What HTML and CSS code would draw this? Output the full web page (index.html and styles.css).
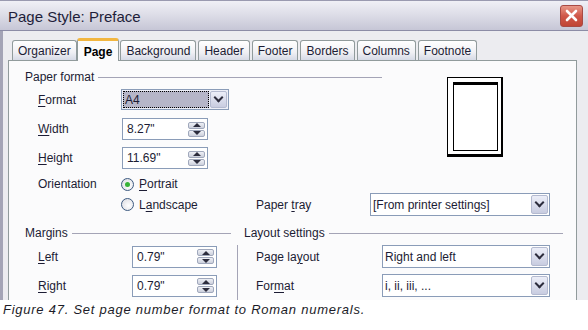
FILE: index.html
```html
<!DOCTYPE html>
<html lang="en">
<head>
    <meta charset="UTF-8">
    <title>Page Style: Preface</title>
    <link rel="stylesheet" href="styles.css">
</head>
<body>
<div class="dialog">
    <div class="titlebar">
        <span class="wintitle">Page Style: Preface</span>
        <span class="close">
            <svg width="13" height="13" viewBox="0 0 13 13"><path d="M2 2l9 9M11 2l-9 9" stroke="#fff" stroke-width="2.6" stroke-linecap="round"/></svg>
        </span>
    </div>
    <div class="main">
        <div class="tabs">
            <span class="tab">Organizer</span>
            <span class="tab active">Page</span>
            <span class="tab">Background</span>
            <span class="tab">Header</span>
            <span class="tab">Footer</span>
            <span class="tab">Borders</span>
            <span class="tab">Columns</span>
            <span class="tab">Footnote</span>
        </div>
        <div class="panel">
            <div class="paper">
                <div class="paper-left">
                    <div class="heading"><span>Paper format</span><i class="rule"></i></div>
                    <div class="row r-format">
                        <span class="lbl"><u>F</u>ormat</span>
                        <span class="select focus w-format"><span class="val">A4</span><span class="drop"></span></span>
                    </div>
                    <div class="row r-field">
                        <span class="lbl"><u>W</u>idth</span>
                        <span class="field w-paper"><span class="val">8.27"</span><span class="spin"><i></i><i></i></span></span>
                    </div>
                    <div class="row r-field">
                        <span class="lbl"><u>H</u>eight</span>
                        <span class="field w-paper"><span class="val">11.69"</span><span class="spin"><i></i><i></i></span></span>
                    </div>
                </div>
                <div class="preview"><div class="sheet"></div></div>
            </div>
            <div class="row r-orient">
                <span class="lbl">Orientation</span>
                <span class="radio checked"></span>
                <span><u>P</u>ortrait</span>
            </div>
            <div class="row r-land">
                <span class="lbl"></span>
                <span class="opt"><span class="radio"></span><span>L<u>a</u>ndscape</span></span>
                <span>Paper <u>t</u>ray</span>
                <span class="select w-tray"><span class="val">[From printer settings]</span><span class="drop"></span></span>
            </div>
            <div class="lower">
                <div class="heading h-margins"><span>Margins</span><i class="rule"></i></div>
                <div class="heading h-layout"><span>Layout settings</span><i class="rule"></i></div>
                <div class="col-margins">
                    <div class="row r-low">
                        <span class="lbl lbl-m"><u>L</u>eft</span>
                        <span class="field w-margin"><span class="val">0.79"</span><span class="spin"><i></i><i></i></span></span>
                    </div>
                    <div class="row r-low">
                        <span class="lbl lbl-m"><u>R</u>ight</span>
                        <span class="field w-margin"><span class="val">0.79"</span><span class="spin"><i></i><i></i></span></span>
                    </div>
                </div>
                <div class="col-layout">
                    <div class="row r-low">
                        <span class="lbl lbl-l">Page la<u>y</u>out</span>
                        <span class="select w-layout"><span class="val">Right and left</span><span class="drop"></span></span>
                    </div>
                    <div class="row r-low">
                        <span class="lbl lbl-l">For<u>m</u>at</span>
                        <span class="select w-layout"><span class="val">i, ii, iii, ...</span><span class="drop"></span></span>
                    </div>
                </div>
            </div>
        </div>
    </div>
</div>
<p class="figcap">Figure 47. Set page number format to Roman numerals.</p>
</body>
</html>
```

FILE: styles.css
```css
* {
    box-sizing: border-box;
}

body {
    margin: 0;
    width: 588px;
    height: 330px;
    overflow: hidden;
    background: #fff;
    font-family: "Liberation Sans", Arial, sans-serif;
    font-size: 12px;
    color: #1c1c34;
}

u {
    text-decoration-thickness: 1px;
    text-underline-offset: 2px;
}

.dialog {
    height: 300px;
    background: #ececf0;
    overflow: hidden;
}

.titlebar {
    height: 31px;
    display: flex;
    align-items: center;
    justify-content: space-between;
    padding: 0 5px 0 8px;
    border-top: 1px solid #9a9ab0;
    border-bottom: 1px solid #8c8ca6;
    background: linear-gradient(#f0f0f6, #dedee8 45%, #c6c6d6);
}

.wintitle {
    font-size: 15px;
    color: #1e1e3a;
    padding-top: 2px;
}

.close {
    width: 23px;
    height: 22px;
    border: 1px solid #a84a44;
    border-radius: 3px;
    background: linear-gradient(#e89888, #d0584a 50%, #c04434);
    display: flex;
    align-items: center;
    justify-content: center;
}

.main {
    height: 269px;
    border-left: 3px solid #a4a4b6;
}

.tabs {
    height: 29px;
    display: flex;
    align-items: flex-end;
    gap: 2px;
    padding-left: 9px;
}

.tab {
    height: 20px;
    padding: 3px 5px 0;
    border: 1px solid #919b9c;
    border-bottom: none;
    border-radius: 3px 3px 0 0;
    background: linear-gradient(#ffffff, #f0f0f4 60%, #d6dae6);
    color: #1c1c34;
}

.tab.active {
    height: 23px;
    margin: 0 -1px -1px -2px;
    padding: 4px 6px 0;
    border-top: 3px solid #f2b640;
    background: #fbfbfc;
    font-weight: bold;
    color: #000;
}

.panel {
    margin-left: 5px;
    width: 569px;
    height: 240px;
    border: 1px solid #919b9c;
    border-bottom: none;
    background: #fbfbfc;
    padding: 9px 0 0 16px;
    overflow: hidden;
}

.heading {
    height: 14px;
    display: flex;
    align-items: center;
}

.rule {
    flex: 1;
    height: 0;
    margin-left: 4px;
    border-top: 1px solid #a4a4b6;
}

.paper {
    display: flex;
}

.paper-left {
    width: 357px;
}

.preview {
    margin: 7px 0 0 65px;
    width: 56px;
    height: 80px;
    border: solid #000;
    border-width: 1px 2px 3px 1px;
    background: #fff;
    padding: 4px 0 0 5px;
}

.sheet {
    width: 45px;
    height: 69px;
    border: 1px solid #000;
    border-top-width: 3px;
}

.row {
    display: flex;
    align-items: center;
}

.lbl {
    width: 96px;
    padding-left: 13px;
    flex: none;
}

.r-format {
    height: 21px;
    margin-top: 5px;
}

.r-field {
    height: 22px;
    margin-top: 8px;
}

.r-field + .r-field {
    margin-top: 7px;
}

.r-field .field {
    margin-left: 1px;
}

.r-orient {
    height: 14px;
    margin-top: 8px;
    gap: 5px;
}

.r-orient .lbl {
    margin-right: -5px;
}

.r-land {
    height: 23px;
    margin-top: 2px;
}

.opt {
    width: 135px;
    display: flex;
    align-items: center;
    gap: 5px;
}

.r-land .opt + span {
    width: 114px;
}

.field, .select {
    position: relative;
    display: flex;
    align-items: center;
    border: 1px solid #8a9cb8;
    background: #fff;
    flex: none;
}

.field {
    height: 22px;
    padding-left: 4px;
}

.select {
    height: 23px;
    padding-left: 2px;
}

.w-format {
    width: 108px;
    height: 21px;
}

.w-paper {
    width: 86px;
}

.w-tray {
    width: 180px;
}

.w-margin {
    width: 85px;
}

.w-layout {
    width: 168px;
}

.val {
    flex: 1;
    white-space: nowrap;
}

.select.focus {
    padding: 1px;
    background: #eef0f8;
}

.select.focus .val {
    align-self: stretch;
    display: flex;
    align-items: center;
    padding-left: 1px;
    background: #b6b6c8;
    border: 1px dotted #000;
    margin-right: 1px;
}

.drop {
    width: 17px;
    height: 19px;
    margin-right: 1px;
    border: 1px solid #b4bad0;
    border-radius: 2px;
    background: linear-gradient(#eceef8, #c8cce0);
    display: flex;
    align-items: center;
    justify-content: center;
}

.focus .drop {
    height: 17px;
    margin-right: 0;
}

.drop::after {
    content: "";
    width: 5px;
    height: 5px;
    margin-top: -4px;
    border-right: 2px solid #2c2c3c;
    border-bottom: 2px solid #2c2c3c;
    transform: rotate(45deg);
}

.spin {
    width: 17px;
    height: 15px;
    margin-right: 2px;
    display: flex;
    flex-direction: column;
    gap: 1px;
}

.spin i {
    flex: 1;
    border: 1px solid #a0a8bc;
    border-radius: 2px;
    background: linear-gradient(#eef0f6, #ccd0dc);
    display: flex;
    align-items: center;
    justify-content: center;
}

.spin i::after {
    content: "";
    border-left: 4px solid transparent;
    border-right: 4px solid transparent;
    border-bottom: 4px solid #2c2c3c;
}

.spin i + i::after {
    border-bottom: none;
    border-top: 4px solid #2c2c3c;
}

.radio {
    width: 13px;
    height: 13px;
    border: 1px solid #3c5a80;
    border-radius: 50%;
    background: radial-gradient(circle at 60% 60%, #ffffff, #e4e4e8 70%, #c8ccd8);
    display: flex;
    align-items: center;
    justify-content: center;
    flex: none;
}

.radio.checked::after {
    content: "";
    width: 5px;
    height: 5px;
    border-radius: 50%;
    background: #36b236;
}

.lower {
    margin-top: 10px;
    display: grid;
    grid-template-columns: 212px 1fr;
}

.h-margins {
    margin-right: 6px;
}

.h-layout {
    padding-left: 7px;
    margin-right: 13px;
}

.col-margins, .col-layout {
    margin-top: 5px;
    padding-bottom: 10px;
}

.col-layout {
    border-left: 1px solid #a4a4b6;
    padding-left: 18px;
}

.r-low {
    height: 23px;
}

.r-low + .r-low {
    margin-top: 6px;
}

.lbl-m {
    width: 107px;
}

.lbl-l {
    width: 126px;
    padding-left: 0;
}

.figcap {
    margin: 2px 0 0 3px;
    font-style: italic;
    font-size: 13px;
    letter-spacing: 0.75px;
    color: #1c1c28;
}
```
